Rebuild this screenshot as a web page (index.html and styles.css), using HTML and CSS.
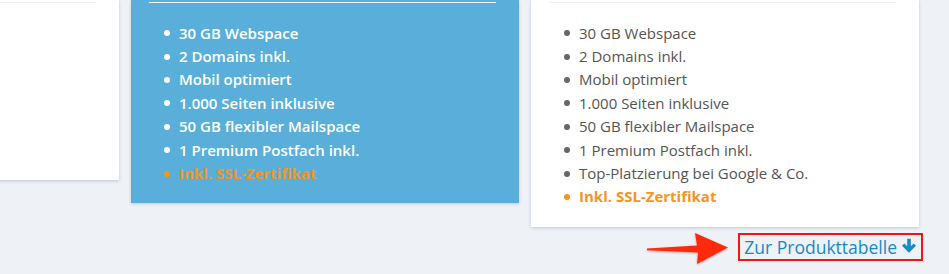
FILE: index.html
```html
<!DOCTYPE html>
<html lang="de">
<head>
<meta charset="utf-8">
<title>Webhosting Tarife</title>
<link rel="stylesheet" href="styles.css">
</head>
<body>
<div class="page">
  <div class="plans">
    <section class="plan plan-basic">
      <hr class="plan-rule">
    </section>
    <section class="plan plan-featured">
      <hr class="plan-rule">
      <ul class="features">
        <li>30 GB Webspace</li>
        <li>2 Domains inkl.</li>
        <li>Mobil optimiert</li>
        <li>1.000 Seiten inklusive</li>
        <li>50 GB flexibler Mailspace</li>
        <li>1 Premium Postfach inkl.</li>
        <li class="highlight">Inkl. SSL-Zertifikat</li>
      </ul>
    </section>
    <section class="plan">
      <hr class="plan-rule">
      <ul class="features">
        <li>30 GB Webspace</li>
        <li>2 Domains inkl.</li>
        <li>Mobil optimiert</li>
        <li>1.000 Seiten inklusive</li>
        <li>50 GB flexibler Mailspace</li>
        <li>1 Premium Postfach inkl.</li>
        <li>Top-Platzierung bei Google &amp; Co.</li>
        <li class="highlight">Inkl. SSL-Zertifikat</li>
      </ul>
    </section>
  </div>
  <div class="table-link-row">
    <a class="table-link" href="#produkttabelle">Zur Produkttabelle
      <svg class="down-icon" viewBox="0 0 16 16" width="16" height="17" aria-hidden="true">
        <path d="M6.2 1.2h3.6v7.6l2.9-2.9 2.3 2.4L8 15.2 1 8.3l2.3-2.4 2.9 2.9z" fill="currentColor"/>
      </svg>
    </a>
  </div>
  <svg class="pointer-arrow" viewBox="0 0 88 36" width="88" height="36" aria-hidden="true">
    <path d="M2 17.6 L52 14.6 L50 2 L83 16.5 L52 33 L53 21.6 L2 19.2 Z" fill="#ff2a0c"/>
  </svg>
</div>
</body>
</html>
```

FILE: styles.css
```css
html, body {
  margin: 0;
  padding: 0;
}

body {
  background: #eef2f7;
  font-family: "Open Sans", "Noto Sans", sans-serif;
  overflow: hidden;
}

.page {
  position: relative;
  width: 949px;
  height: 274px;
}

.plans {
  display: grid;
  grid-template-columns: repeat(3, 388px);
  column-gap: 12px;
  align-items: start;
  margin-left: -269px;
}

.plan {
  background: #ffffff;
  padding: 2px 23px 18px 18px;
  box-shadow: 0 1px 3px rgba(40, 50, 70, 0.22);
}

.plan-basic {
  height: 160px;
}

.plan-featured {
  background: #59afd9;
}

.plan-rule {
  margin: 0;
  border: 0;
  border-top: 1px solid #eeeeee;
}

.plan-featured .plan-rule {
  border-top-color: #ffffff;
}

.features {
  list-style: none;
  margin: 18.5px 0 0;
  padding: 0 0 0 15px;
  font-size: 15px;
  line-height: 23.4px;
  color: #555555;
}

.features li {
  display: flex;
  align-items: center;
  white-space: nowrap;
}

.features li::before {
  content: "";
  flex: none;
  width: 6px;
  height: 6px;
  border-radius: 50%;
  background: #666666;
  margin-right: 9px;
}

.plan-featured .features {
  color: #ffffff;
  font-weight: 600;
}

.plan-featured .features li::before {
  background: #ffffff;
}

.features li.highlight {
  color: #f7931e;
  font-weight: 700;
}

.features li.highlight::before {
  background: #f7931e;
}

.table-link-row {
  display: flex;
  justify-content: flex-end;
  padding: 6px 26px 0 0;
}

.table-link {
  display: flex;
  align-items: center;
  gap: 4px;
  height: 24px;
  padding: 0 4px;
  border: 2px solid #f2160d;
  color: #1a89c7;
  font-size: 17.5px;
  text-decoration: none;
}

.down-icon {
  display: block;
  margin-top: -3px;
}

.pointer-arrow {
  position: absolute;
  left: 645px;
  top: 231px;
  filter: drop-shadow(0 1px 1px rgba(120, 20, 10, 0.35));
}
```
